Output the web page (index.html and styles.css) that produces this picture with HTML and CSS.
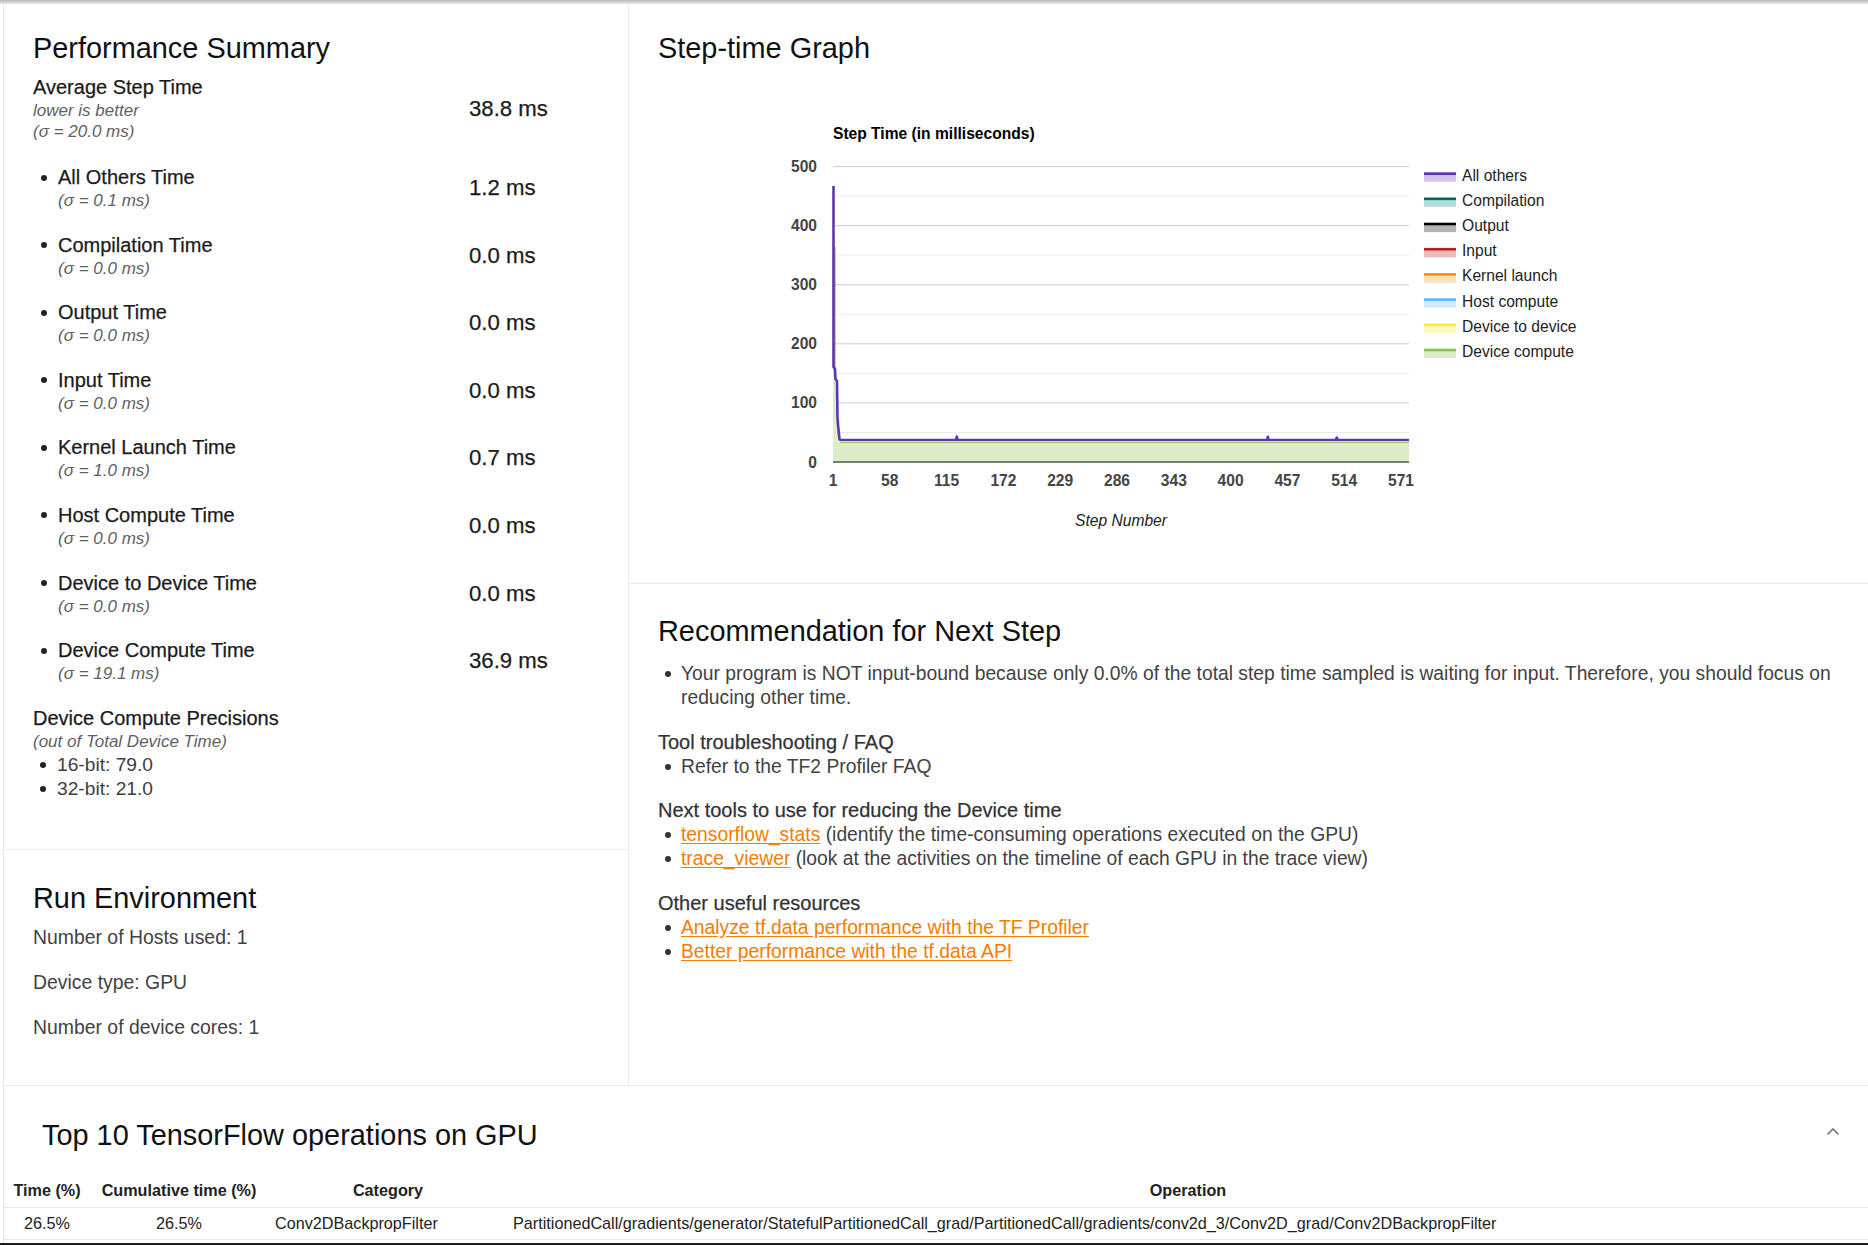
FILE: index.html
```html
<!DOCTYPE html>
<html lang="en">
<head>
<meta charset="utf-8">
<title>Overview Page</title>
<link rel="stylesheet" href="styles.css">
</head>
<body>
<div class="shade"></div>
<main class="page">
  <div class="top-grid">
    <div class="left-col">
      <section class="card perf">
        <h2 class="card-title">Performance Summary</h2>
        <div class="metric main-metric">
          <div class="metric-text">
            <div class="label">Average Step Time</div>
            <div class="note">lower is better</div>
            <div class="note">(σ = 20.0 ms)</div>
          </div>
          <div class="metric-value">38.8 ms</div>
        </div>
        <ul class="metric-list">
          <li class="metric sub-metric">
            <span class="dot-col"><span class="dot"></span></span>
            <div class="metric-text"><div class="label">All Others Time</div><div class="note">(σ = 0.1 ms)</div></div>
            <div class="metric-value">1.2 ms</div>
          </li>
          <li class="metric sub-metric">
            <span class="dot-col"><span class="dot"></span></span>
            <div class="metric-text"><div class="label">Compilation Time</div><div class="note">(σ = 0.0 ms)</div></div>
            <div class="metric-value">0.0 ms</div>
          </li>
          <li class="metric sub-metric">
            <span class="dot-col"><span class="dot"></span></span>
            <div class="metric-text"><div class="label">Output Time</div><div class="note">(σ = 0.0 ms)</div></div>
            <div class="metric-value">0.0 ms</div>
          </li>
          <li class="metric sub-metric">
            <span class="dot-col"><span class="dot"></span></span>
            <div class="metric-text"><div class="label">Input Time</div><div class="note">(σ = 0.0 ms)</div></div>
            <div class="metric-value">0.0 ms</div>
          </li>
          <li class="metric sub-metric">
            <span class="dot-col"><span class="dot"></span></span>
            <div class="metric-text"><div class="label">Kernel Launch Time</div><div class="note">(σ = 1.0 ms)</div></div>
            <div class="metric-value">0.7 ms</div>
          </li>
          <li class="metric sub-metric">
            <span class="dot-col"><span class="dot"></span></span>
            <div class="metric-text"><div class="label">Host Compute Time</div><div class="note">(σ = 0.0 ms)</div></div>
            <div class="metric-value">0.0 ms</div>
          </li>
          <li class="metric sub-metric">
            <span class="dot-col"><span class="dot"></span></span>
            <div class="metric-text"><div class="label">Device to Device Time</div><div class="note">(σ = 0.0 ms)</div></div>
            <div class="metric-value">0.0 ms</div>
          </li>
          <li class="metric sub-metric">
            <span class="dot-col"><span class="dot"></span></span>
            <div class="metric-text"><div class="label">Device Compute Time</div><div class="note">(σ = 19.1 ms)</div></div>
            <div class="metric-value">36.9 ms</div>
          </li>
        </ul>
        <div class="precisions">
          <div class="label">Device Compute Precisions</div>
          <div class="note">(out of Total Device Time)</div>
          <ul class="plain-list">
            <li><span class="dot-col narrow"><span class="dot"></span></span><span>16-bit: 79.0</span></li>
            <li><span class="dot-col narrow"><span class="dot"></span></span><span>32-bit: 21.0</span></li>
          </ul>
        </div>
      </section>
      <section class="card env">
        <h2 class="card-title">Run Environment</h2>
        <p class="env-line">Number of Hosts used: 1</p>
        <p class="env-line">Device type: GPU</p>
        <p class="env-line">Number of device cores: 1</p>
      </section>
    </div>
    <div class="right-col">
      <section class="card graph">
        <h2 class="card-title">Step-time Graph</h2>
        <svg class="chart" width="1210" height="470" viewBox="0 0 1210 470">
          <text class="chart-title" x="175" y="48.5">Step Time (in milliseconds)</text>
          <g class="minor-grid">
            <line x1="175" x2="751" y1="342.5" y2="342.5"/>
            <line x1="175" x2="751" y1="283.4" y2="283.4"/>
            <line x1="175" x2="751" y1="224.3" y2="224.3"/>
            <line x1="175" x2="751" y1="165.2" y2="165.2"/>
            <line x1="175" x2="751" y1="106.1" y2="106.1"/>
          </g>
          <g class="major-grid">
            <line x1="175" x2="751" y1="312.9" y2="312.9"/>
            <line x1="175" x2="751" y1="253.8" y2="253.8"/>
            <line x1="175" x2="751" y1="194.8" y2="194.8"/>
            <line x1="175" x2="751" y1="135.7" y2="135.7"/>
            <line x1="175" x2="751" y1="76.6" y2="76.6"/>
          </g>
          <g class="y-labels">
            <text x="159" y="82.1">500</text>
            <text x="159" y="141.2">400</text>
            <text x="159" y="200.3">300</text>
            <text x="159" y="259.3">200</text>
            <text x="159" y="318.4">100</text>
            <text x="159" y="377.5">0</text>
          </g>
          <polygon class="area-green" points="175,372 175,277 176.5,283 178,290 179,300 179.5,328 180.5,340 182,352.5 751,352.5 751,372"/>
          <polyline class="line-green" points="182,352.5 751,352.5"/>
          <path class="line-gray" d="M177,157 L177,280"/>
          <path class="line-purple" d="M175.5,96 L175.5,277 L177,279 L177.5,289 L179,291 L179.5,328 L180.5,340 L181.5,349 L182.5,350 L298,350 L298.8,346.5 L299.6,350 L609,350 L609.8,346.8 L610.6,350 L678,350 L678.8,347.5 L679.6,350 L751,350"/>
          <line class="axis" x1="175" x2="751" y1="372" y2="372"/>
          <g class="x-labels">
            <text x="175" y="395.6">1</text>
            <text x="231.8" y="395.6">58</text>
            <text x="288.6" y="395.6">115</text>
            <text x="345.4" y="395.6">172</text>
            <text x="402.2" y="395.6">229</text>
            <text x="459" y="395.6">286</text>
            <text x="515.8" y="395.6">343</text>
            <text x="572.6" y="395.6">400</text>
            <text x="629.4" y="395.6">457</text>
            <text x="686.2" y="395.6">514</text>
            <text x="743" y="395.6">571</text>
          </g>
          <text class="axis-title" x="463" y="436">Step Number</text>
          <g class="legend">
            <rect x="766" y="85" width="32" height="6.7" fill="#d1c4e9"/><rect x="766" y="82.3" width="32" height="2.7" fill="#5e35b1"/>
            <text x="804" y="90.6">All others</text>
            <rect x="766" y="110.2" width="32" height="6.7" fill="#b2dfdb"/><rect x="766" y="107.5" width="32" height="2.7" fill="#00695c"/>
            <text x="804" y="115.8">Compilation</text>
            <rect x="766" y="135.4" width="32" height="6.7" fill="#b3b3b3"/><rect x="766" y="132.7" width="32" height="2.7" fill="#000000"/>
            <text x="804" y="141">Output</text>
            <rect x="766" y="160.6" width="32" height="6.7" fill="#e9baba"/><rect x="766" y="157.9" width="32" height="2.7" fill="#b71c1c"/>
            <text x="804" y="166.2">Input</text>
            <rect x="766" y="185.8" width="32" height="6.7" fill="#ffdfb5"/><rect x="766" y="183.1" width="32" height="2.7" fill="#ff8f00"/>
            <text x="804" y="191.4">Kernel launch</text>
            <rect x="766" y="211" width="32" height="6.7" fill="#d3e8fb"/><rect x="766" y="208.3" width="32" height="2.7" fill="#64b5f6"/>
            <text x="804" y="216.6">Host compute</text>
            <rect x="766" y="236.2" width="32" height="6.7" fill="#fff8c4"/><rect x="766" y="233.5" width="32" height="2.7" fill="#ffeb3b"/>
            <text x="804" y="241.8">Device to device</text>
            <rect x="766" y="261.4" width="32" height="6.7" fill="#dcedc8"/><rect x="766" y="258.7" width="32" height="2.7" fill="#8bc34a"/>
            <text x="804" y="267">Device compute</text>
          </g>
        </svg>
      </section>
      <section class="card rec">
        <h2 class="card-title">Recommendation for Next Step</h2>
        <ul class="rec-list first">
          <li><span class="dot-col rec-dot"><span class="dot"></span></span><span>Your program is NOT input-bound because only 0.0% of the total step time sampled is waiting for input. Therefore, you should focus on reducing other time.</span></li>
        </ul>
        <div class="rec-block">
          <div class="label sub">Tool troubleshooting / FAQ</div>
          <ul class="rec-list">
            <li><span class="dot-col rec-dot"><span class="dot"></span></span><span>Refer to the TF2 Profiler FAQ</span></li>
          </ul>
        </div>
        <div class="rec-block">
          <div class="label sub">Next tools to use for reducing the Device time</div>
          <ul class="rec-list">
            <li><span class="dot-col rec-dot"><span class="dot"></span></span><span><a class="link" href="#">tensorflow_stats</a> (identify the time-consuming operations executed on the GPU)</span></li>
            <li><span class="dot-col rec-dot"><span class="dot"></span></span><span><a class="link" href="#">trace_viewer</a> (look at the activities on the timeline of each GPU in the trace view)</span></li>
          </ul>
        </div>
        <div class="rec-block">
          <div class="label sub">Other useful resources</div>
          <ul class="rec-list">
            <li><span class="dot-col rec-dot"><span class="dot"></span></span><span><a class="link" href="#">Analyze tf.data performance with the TF Profiler</a></span></li>
            <li><span class="dot-col rec-dot"><span class="dot"></span></span><span><a class="link" href="#">Better performance with the tf.data API</a></span></li>
          </ul>
        </div>
      </section>
    </div>
  </div>
  <section class="ops">
    <div class="ops-head">
      <h2 class="card-title">Top 10 TensorFlow operations on GPU</h2>
      <svg class="chevron" width="14" height="9" viewBox="0 0 14 9"><path d="M1.5,7.5 L7,2 L12.5,7.5" fill="none" stroke="#777" stroke-width="1.6"/></svg>
    </div>
    <table class="ops-table">
      <colgroup><col class="c1"><col class="c2"><col class="c3"><col class="c4"></colgroup>
      <thead>
        <tr><th>Time (%)</th><th>Cumulative time (%)</th><th>Category</th><th>Operation</th></tr>
      </thead>
      <tbody>
        <tr><td class="num">26.5%</td><td class="num">26.5%</td><td class="cat">Conv2DBackpropFilter</td><td class="op">PartitionedCall/gradients/generator/StatefulPartitionedCall_grad/PartitionedCall/gradients/conv2d_3/Conv2D_grad/Conv2DBackpropFilter</td></tr>
      </tbody>
    </table>
  </section>
</main>
<div class="edge"></div>
</body>
</html>
```

FILE: styles.css
```css
* { box-sizing: border-box; }
html, body { margin: 0; padding: 0; background: #fff; }
body {
  font-family: "Liberation Sans", Arial, Helvetica, sans-serif;
  color: #212121;
  width: 1868px;
  height: 1245px;
  overflow: hidden;
  display: flex;
  flex-direction: column;
}
ul { list-style: none; margin: 0; padding: 0; }
p { margin: 0; }
h2 { margin: 0; }

.shade {
  height: 4px;
  flex: none;
  background: linear-gradient(#b9b9b9, #e9e9e9);
}
.page {
  flex: 1;
  margin-left: 3px;
  border-left: 1px solid #e6e6e6;
  display: flex;
  flex-direction: column;
}
.edge {
  height: 2px;
  flex: none;
  background: #1c1c1c;
}

.top-grid {
  display: grid;
  grid-template-columns: 625px 1fr;
  border-bottom: 1px solid #ebebeb;
}
.left-col {
  display: flex;
  flex-direction: column;
  border-right: 1px solid #ebebeb;
}
.right-col {
  display: flex;
  flex-direction: column;
}

.card-title {
  font-size: 28.9px;
  font-weight: 400;
  line-height: 33px;
  color: #111;
}

.label {
  font-size: 20px;
  line-height: 25px;
  color: #1c1c1c;
  -webkit-text-stroke: 0.25px currentColor;
}
.note {
  font-size: 17px;
  line-height: 21px;
  font-style: italic;
  color: #5f5f5f;
}

/* Performance summary */
.perf {
  padding: 28px 0 48px 29px;
  border-bottom: 1px solid #ebebeb;
}
.metric {
  display: grid;
  align-items: center;
}
.main-metric {
  grid-template-columns: 436px auto;
  margin-top: 10px;
}
.sub-metric {
  grid-template-columns: 25px 411px auto;
}
.metric-list { margin-top: 23px; }
.metric-list li + li { margin-top: 21.6px; }
.metric-value {
  font-size: 22.2px;
  color: #1c1c1c;
  -webkit-text-stroke: 0.25px currentColor;
}
.dot-col {
  align-self: start;
  height: 25px;
  display: flex;
  align-items: center;
  flex: none;
  width: 25px;
}
.dot-col.narrow { width: 24px; height: 24px; }
.dot {
  width: 6px;
  height: 6px;
  border-radius: 50%;
  background: #222;
  margin-left: 8px;
}
.narrow .dot { margin-left: 7px; }

.precisions { margin-top: 21.8px; }
.plain-list { margin-top: 1.5px; }
.plain-list li {
  display: flex;
  font-size: 19.2px;
  line-height: 24px;
  color: #404040;
}

/* Run environment */
.env {
  flex: 1;
  padding: 32px 0 46px 29px;
}
.env-line {
  font-size: 19.4px;
  line-height: 24px;
  color: #424242;
  margin-top: 21px;
}
.env .card-title + .env-line { margin-top: 10px; }

/* Step-time graph */
.graph {
  padding: 28px 0 23px 29px;
  border-bottom: 1px solid #ebebeb;
}
.chart {
  display: block;
  margin-top: 25px;
  font-family: "Liberation Sans", Arial, Helvetica, sans-serif;
}
.chart-title { font-size: 15.6px; font-weight: 700; fill: #000; }
.minor-grid line { stroke: #ececec; stroke-width: 1; }
.major-grid line { stroke: #cccccc; stroke-width: 1; }
.y-labels text { font-size: 15.6px; font-weight: 700; fill: #444; text-anchor: end; }
.x-labels text { font-size: 15.6px; font-weight: 700; fill: #444; text-anchor: middle; }
.axis-title { font-size: 15.6px; font-style: italic; fill: #222; text-anchor: middle; }
.axis { stroke: #555; stroke-width: 1.6; }
.area-green { fill: #dcedc8; }
.line-green { stroke: #9ccc65; stroke-width: 1; fill: none; }
.line-gray { stroke: #8a8a8a; stroke-width: 1; fill: none; }
.line-purple { stroke: #5b36b6; stroke-width: 2.6; fill: none; stroke-linejoin: round; }
.legend text { font-size: 15.6px; fill: #222; }

/* Recommendation */
.rec {
  flex: 1;
  padding: 31px 12px 0 29px;
}
.rec-list.first { margin-top: 14px; }
.rec-list li {
  display: flex;
  font-size: 19.3px;
  line-height: 24px;
  color: #424242;
}
.rec-list .dot-col { height: 24px; }
.rec-dot { width: 23px; }
.rec-dot .dot { margin-left: 7px; background: #333; }
.rec-block { margin-top: 18.5px; }
.label.sub { color: #333; line-height: 26px; }
.link {
  color: #f57c00;
  text-decoration: underline;
  text-underline-offset: 2px;
}

/* Ops table */
.ops {
  padding-top: 33px;
}
.ops-head {
  display: flex;
  align-items: center;
  justify-content: space-between;
  padding: 0 28px 0 38px;
}
.chevron { display: block; margin-top: -8px; }
.ops-table {
  margin-top: 21px;
  width: 100%;
  border-collapse: collapse;
  table-layout: fixed;
  font-size: 16.2px;
}
.c1 { width: 86px; }
.c2 { width: 178px; }
.c3 { width: 240px; }
.ops-table th {
  font-weight: 700;
  line-height: 20px;
  padding: 7px 4px 7px;
  text-align: center;
  color: #222;
  border-bottom: 1px solid #e6e6e6;
}
.ops-table td {
  line-height: 20px;
  padding: 5px 4px 6px;
  color: #222;
  border-bottom: 1px solid #e6e6e6;
  white-space: nowrap;
}
.ops-table td.num { text-align: center; }
.ops-table td.cat { padding-left: 7px; }
.ops-table td.op { padding-left: 5px; }
```
